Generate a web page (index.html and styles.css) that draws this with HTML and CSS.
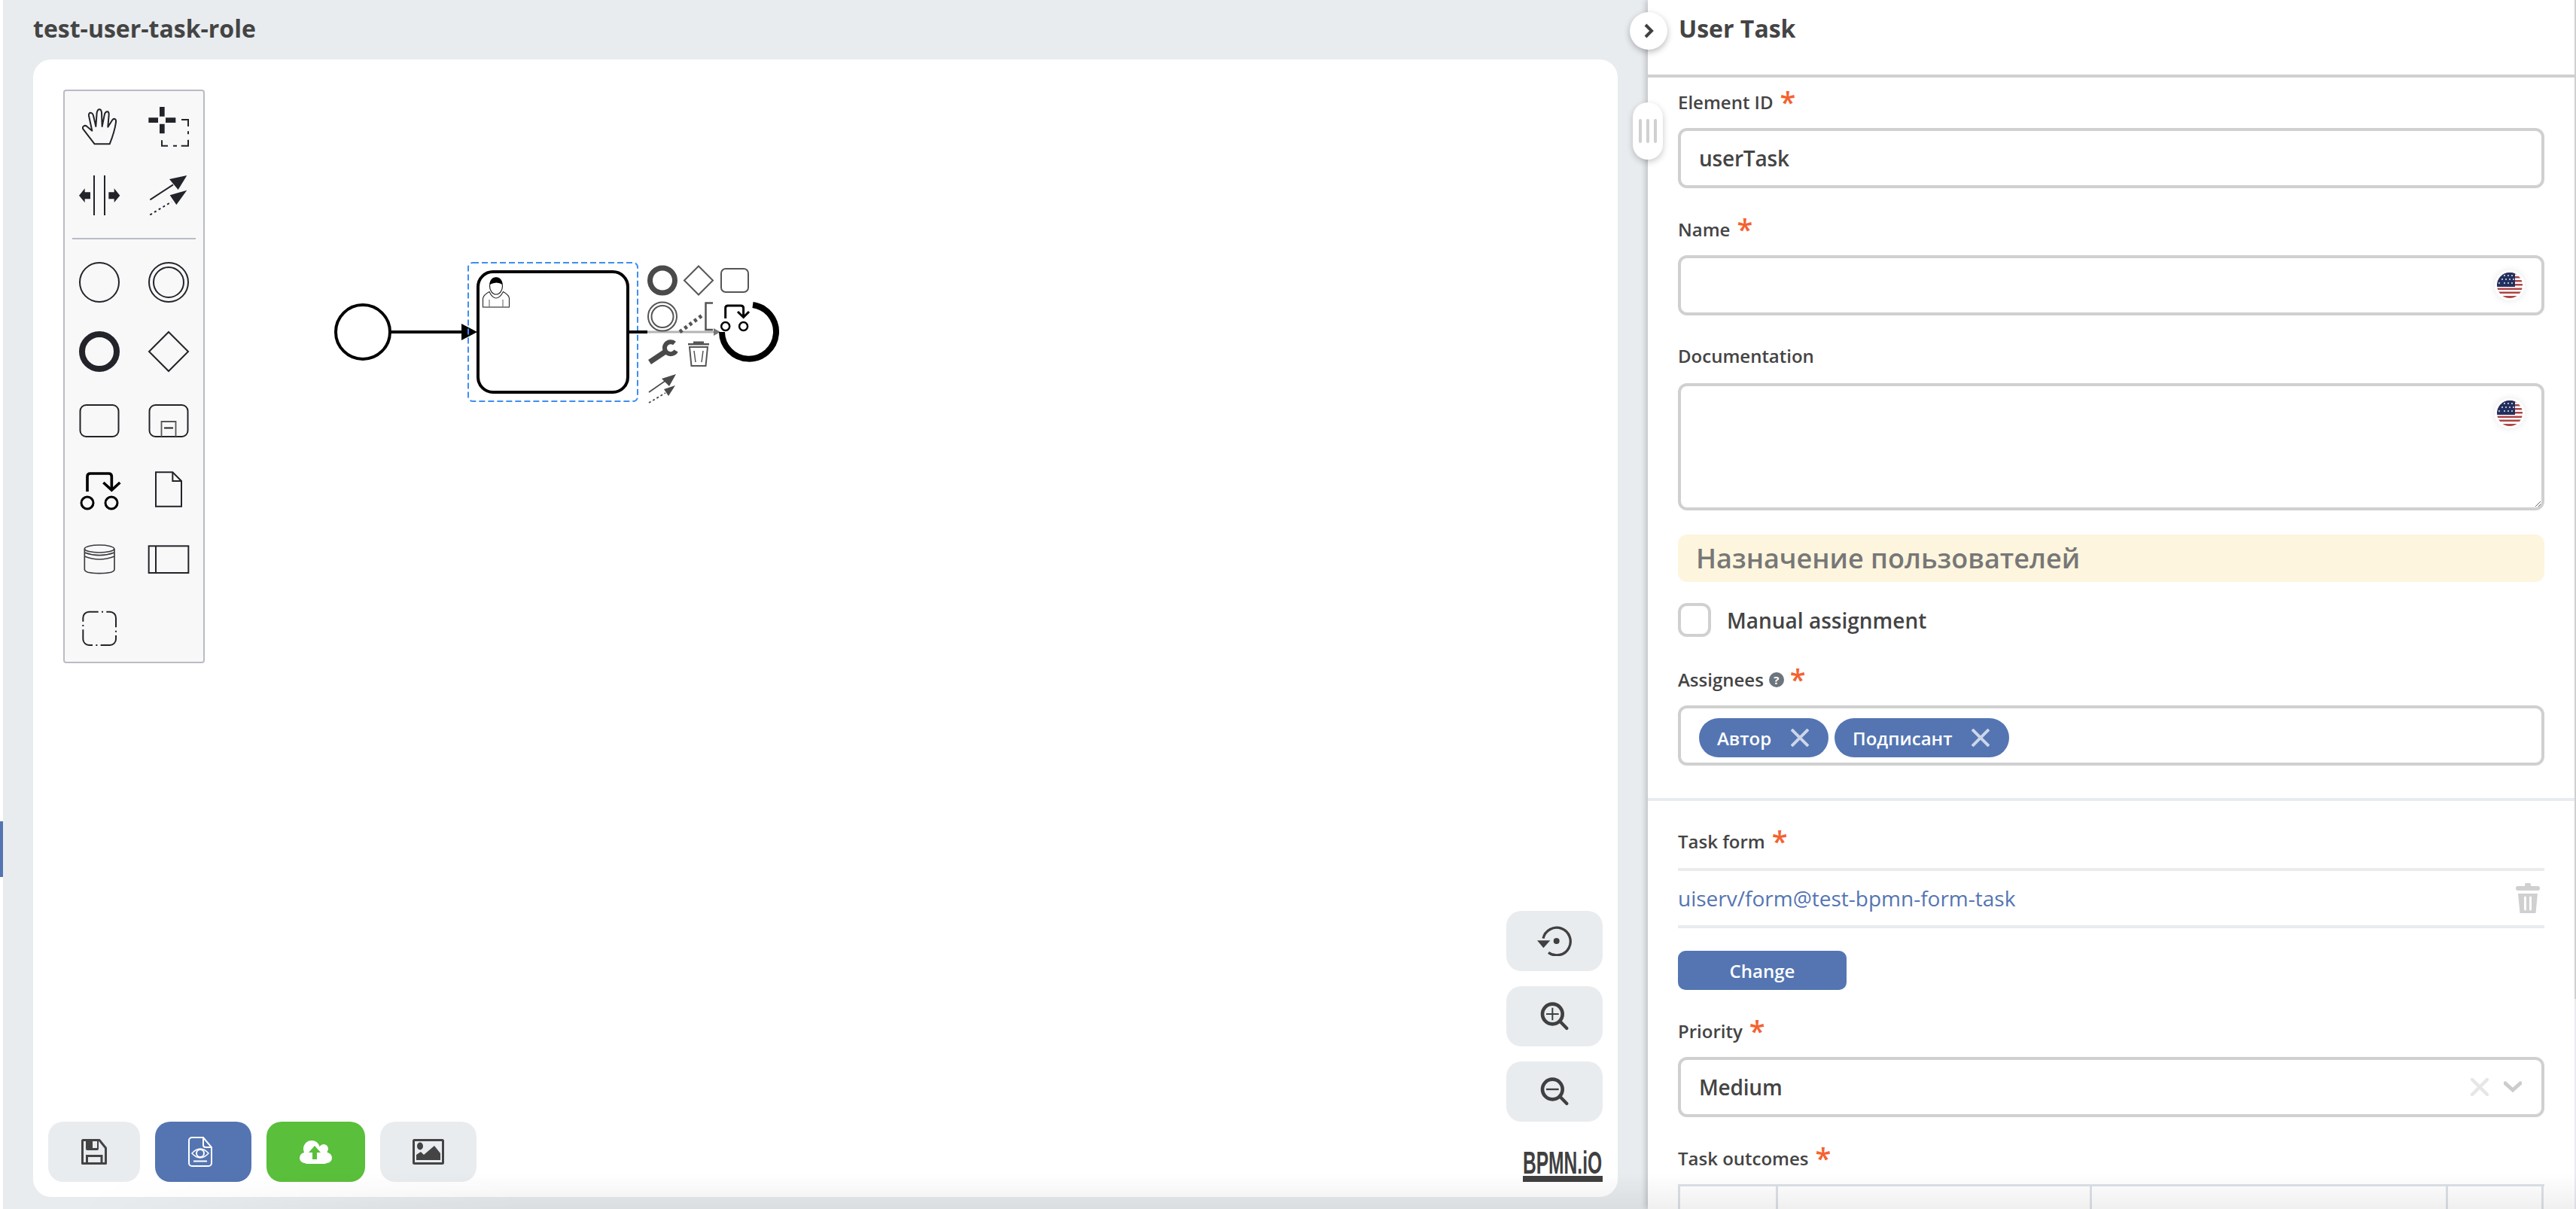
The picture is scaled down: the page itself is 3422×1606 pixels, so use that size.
FILE: index.html
```html
<!DOCTYPE html>
<html lang="en">
<head>
<meta charset="utf-8">
<title>test-user-task-role</title>
<link rel="stylesheet" href="styles.css">
</head>
<body>
<div class="app">
  <div class="edge"><div class="edge-mark"></div></div>
  <main class="workspace">
    <h1 class="title">test-user-task-role</h1>
    <section class="card">
      <svg class="diagram" width="1100" height="600" viewBox="44 79 1100 600" fill="none">
        <circle cx="482" cy="441" r="36" stroke="#000" stroke-width="4" fill="#fff"/>
        <path d="M519 441H616" stroke="#000" stroke-width="4"/>
        <path d="M613 430L634 441L613 452Z" fill="#000"/>
        <rect x="622" y="349" width="225" height="184" rx="6" stroke="#3d8fef" stroke-width="2" stroke-dasharray="8 4"/>
        <rect x="635" y="361" width="199" height="160" rx="20" stroke="#000" stroke-width="4" fill="#fff"/>
        <path d="M641.5 408V396.5Q642 392 650 387.5Q654 396 659 396Q664 396 668.500 387.500Q676 392 676.500 396V408Z" stroke="#333" stroke-width="1.200" fill="#fff"/>
        <path d="M650 408V398M668 408V398M641.500 408H676.500" stroke="#777" stroke-width="1.200"/>
        <ellipse cx="659" cy="380" rx="8.500" ry="11" stroke="#222" stroke-width="1.200" fill="#fff"/>
        <path d="M650.500 378C650.500 365 667.500 365 667.500 378Q660 373 650.500 378Z" fill="#000"/>
        <path d="M835 441H860" stroke="#000" stroke-width="4"/>
        <path d="M860 441H950" stroke="#b5b5b5" stroke-width="3"/>
        <path d="M948 436L957 441L948 446Z" fill="#777"/>
        <path d="M1000 405A36 36 0 1 1 959 441" stroke="#000" stroke-width="8"/>
        <circle cx="880" cy="372.500" r="16.500" stroke="#4a4a4a" stroke-width="7"/>
        <path d="M928 353.500L947 372.500L928 391.500L909 372.500Z" stroke="#555" stroke-width="2" fill="#fff"/>
        <rect x="958" y="357" width="36" height="31" rx="6" stroke="#555" stroke-width="2"/>
        <circle cx="880" cy="420.500" r="19" stroke="#555" stroke-width="2"/>
        <circle cx="880" cy="420.500" r="14.500" stroke="#555" stroke-width="2"/>
        <path d="M903 441L934 418" stroke="#555" stroke-width="5" stroke-dasharray="4 4"/>
        <path d="M947 402.500H937.500V438H947" stroke="#555" stroke-width="2.500"/>
        <path d="M963.700 423V409Q963.700 406 967 406H984Q987.600 406 987.600 409V420M980 414L987.600 421.500L995 414" stroke="#000" stroke-width="3"/>
        <circle cx="963.700" cy="433.500" r="5.500" stroke="#000" stroke-width="2.500" fill="#fff"/>
        <circle cx="987.600" cy="433.500" r="5.500" stroke="#000" stroke-width="2.500" fill="#fff"/>
        <path d="M863 481L884 467" stroke="#4a4a4a" stroke-width="7"/>
        <path d="M896 456A8 8 0 1 0 898 466" stroke="#4a4a4a" stroke-width="6"/>
        <path d="M921 453.500H935V456H942V458.500H914V456H921Z" fill="#555"/>
        <path d="M916 461H940L937.500 486H918.500Z" stroke="#555" stroke-width="2"/>
        <path d="M922 466L924 481M934 466L932 481" stroke="#555" stroke-width="1.500"/>
        <path d="M862 521L888 503" stroke="#4a4a4a" stroke-width="1.700"/>
        <path d="M898 497L879 503L889 513Z" fill="#4a4a4a"/>
        <path d="M862 535L884 522" stroke="#4a4a4a" stroke-width="1.800" stroke-dasharray="3 3"/>
        <path d="M897 512L882 517L888 526Z" fill="#4a4a4a"/>
      </svg>

      <nav class="palette">
        <div class="palette-grid">
          <span class="tool"><svg width="92" height="92" viewBox="258 367 276 276" fill="none"><path d="M377 575L331 515C325 505 340 495 350 508L367 522L354 462C352 447 368 445 373 465L382 505L386 450C390 432 403 432 405 450L407 505L417 455C424 440 435 445 434 458L430 507L447 480C455 470 464 475 462 488C457 525 447 550 437 575Z" stroke="#22242a" stroke-width="6" stroke-linejoin="round"/></svg></span>
          <span class="tool"><svg width="92" height="92" viewBox="534 367 276 276" fill="#22242a"><path d="M636 427H656V465H636ZM636 495H656V533H636ZM592 470H630V490H592ZM660 470H700V490H660Z"/><path d="M723 478H750V505M750 524V536M750 558V582H722M705 582H690M669 582H645V560" stroke="#22242a" stroke-width="6" fill="none"/></svg></span>
          <span class="tool"><svg width="92" height="92" viewBox="258 646 276 276" fill="#22242a"><path d="M375 703V862M417 703V862" stroke="#22242a" stroke-width="6"/><path d="M315 783L338 755V770H360V797H338V811ZM478 783L455 755V770H433V797H455V811Z"/></svg></span>
          <span class="tool"><svg width="92" height="92" viewBox="534 646 276 276" fill="#22242a"><path d="M598 800L690 740" stroke="#22242a" stroke-width="6"/><path d="M745 703L675 718L710 760Z"/><path d="M598 860L684 808" stroke="#22242a" stroke-width="6" stroke-dasharray="9 11"/><path d="M745 762L677 782L703 820Z"/></svg></span>
        </div>
        <div class="palette-sep"></div>
        <div class="palette-grid">
          <span class="tool"><svg width="92" height="92" viewBox="-46 -46 92 92" fill="none"><circle r="26" stroke="#22242a" stroke-width="2"/></svg></span>
          <span class="tool"><svg width="92" height="92" viewBox="-46 -46 92 92" fill="none"><circle r="26" stroke="#22242a" stroke-width="2"/><circle r="20" stroke="#22242a" stroke-width="2"/></svg></span>
          <span class="tool"><svg width="92" height="92" viewBox="-46 -46 92 92" fill="none"><circle r="23" stroke="#22242a" stroke-width="8"/></svg></span>
          <span class="tool"><svg width="92" height="92" viewBox="-46 -46 92 92" fill="none"><path d="M0 -26L26 0L0 26L-26 0Z" stroke="#22242a" stroke-width="2"/></svg></span>
          <span class="tool"><svg width="92" height="92" viewBox="-46 -46 92 92" fill="none"><rect x="-25.500" y="-21" width="51" height="42" rx="8" stroke="#22242a" stroke-width="2"/></svg></span>
          <span class="tool"><svg width="92" height="92" viewBox="-46 -46 92 92" fill="none"><rect x="-25.500" y="-21" width="51" height="42" rx="8" stroke="#22242a" stroke-width="2"/><path d="M-9.500 21V1H9.500V21" stroke="#55575c" stroke-width="1.800"/><path d="M-6 9.500H6" stroke="#22242a" stroke-width="2"/></svg></span>
          <span class="tool"><svg width="92" height="92" viewBox="258 468 276 276" fill="none" stroke="#000"><path d="M348 612V552Q348 540 360 540H433Q445 540 445 552V605" stroke-width="11"/><path d="M412 576L445 606L478 576" stroke-width="11"/><circle cx="348" cy="657" r="24" stroke-width="9"/><circle cx="444" cy="657" r="24" stroke-width="9"/></svg></span>
          <span class="tool"><svg width="92" height="92" viewBox="534 468 276 276" fill="none" stroke="#22242a" stroke-width="6"><path d="M688 535H621V671H723V570Z"/><path d="M688 535V570H723"/></svg></span>
          <span class="tool"><svg width="92" height="92" viewBox="258 742 276 276" fill="none" stroke="#3a3c42" stroke-width="5"><ellipse cx="396" cy="838" rx="59" ry="15"/><path d="M337 838V920Q337 936 396 936Q456 936 456 920V838M337 853Q396 875 456 853M337 868Q396 892 456 868"/></svg></span>
          <span class="tool"><svg width="92" height="92" viewBox="534 742 276 276" fill="none" stroke="#22242a" stroke-width="6"><rect x="593" y="827" width="158" height="107"/><path d="M621 827V934"/></svg></span>
          <span class="tool"><svg width="92" height="92" viewBox="258 1017 276 276" fill="none"><path d="M405 1088H438A24 24 0 0 1 462 1112V1197A24 24 0 0 1 438 1221H355A24 24 0 0 1 331 1197V1112A24 24 0 0 1 355 1088Z" pathLength="488" stroke="#22242a" stroke-width="6" stroke-dasharray="6 13 90 13"/></svg></span>
        </div>
      </nav>

      <div class="actions">
        <button class="btn btn-save" type="button"><svg width="34" height="34" viewBox="0 0 34 34" fill="none"><path d="M2 1.500H24L32.500 12V32.500H1.500V2Z" stroke="#444" stroke-width="3" stroke-linejoin="round"/><path d="M6 1H23V13Q23 15 21 15H8Q6 15 6 13Z" fill="#444"/><rect x="15" y="3" width="6" height="9" fill="#e9ecef"/><path d="M7.500 33V22.500H27V33" stroke="#444" stroke-width="3"/></svg></button>
        <button class="btn btn-preview" type="button"><svg class="preview-icon" width="32" height="40" viewBox="0 0 32 40" fill="none" stroke="#fff" stroke-width="2"><path d="M5 1H20L31 14V35A4 4 0 0 1 27 39H5A4 4 0 0 1 1 35V5A4 4 0 0 1 5 1Z"/><path d="M20 1V11A3 3 0 0 0 23 14H31"/><path d="M5 22Q16 10 27 22Q16 34 5 22Z" stroke-width="1.500"/><circle cx="16" cy="22" r="5"/><path d="M7 32.500H25"/></svg></button>
        <button class="btn btn-deploy" type="button"><svg width="43" height="32" viewBox="0 0 43 32" fill="#fff"><circle cx="16" cy="12" r="11"/><circle cx="32" cy="12" r="6"/><circle cx="7" cy="24" r="7"/><circle cx="36" cy="24" r="7"/><rect x="6" y="14" width="31" height="18" rx="4"/><path d="M20 8L28 17H23V26H17V17H12Z" fill="#5abf3b"/></svg></button>
        <button class="btn btn-image" type="button"><svg width="42" height="34" viewBox="0 0 42 34" fill="none"><rect x="1.500" y="1.500" width="39" height="31" rx="1" stroke="#444" stroke-width="3"/><ellipse cx="10" cy="9.500" rx="4" ry="5" fill="#444"/><path d="M5 28V21L11 17L15 21L29 9L37 19V28Z" fill="#444"/></svg></button>
      </div>

      <div class="zoom">
        <button class="zoom-btn" type="button"><svg width="47" height="40" viewBox="273 152 141 120" fill="none"><path d="M318 258A55 55 0 1 0 297 202" stroke="#404040" stroke-width="10"/><path d="M273 210H325L298 240Z" fill="#404040"/><circle cx="350" cy="212" r="12" fill="#404040"/></svg></button>
        <button class="zoom-btn" type="button"><svg width="40" height="40" viewBox="285 457 120 120" fill="none" stroke="#404040"><circle cx="337" cy="508" r="40" stroke-width="14"/><path d="M312 508H362M337 483V533" stroke-width="6"/><path d="M370 540L394 565" stroke-width="13" stroke-linecap="round"/></svg></button>
        <button class="zoom-btn" type="button"><svg width="40" height="40" viewBox="285 457 120 120" fill="none" stroke="#404040"><circle cx="337" cy="508" r="40" stroke-width="14"/><path d="M312 508H362" stroke-width="7"/><path d="M370 540L394 565" stroke-width="13" stroke-linecap="round"/></svg></button>
      </div>

      <svg class="logo" width="108" height="54" viewBox="0 -12 108 54"><text transform="translate(0 31) scale(.585 1)" font-size="42" class="logo-text">BPMN.iO</text><rect x="0" y="34" width="106" height="8" fill="#404040"/></svg>
    </section>
  </main>

  <aside class="panel">
    <div class="panel-body">
      <header class="panel-head"><h2 class="panel-title">User Task</h2></header>
      <div class="panel-form">
        <div class="label-row first"><span class="label">Element ID</span><span class="req">*</span></div>
        <div class="input"><span>userTask</span></div>

        <div class="label-row"><span class="label">Name</span><span class="req">*</span></div>
        <div class="input"><span class="flag"><svg width="40" height="40" viewBox="0 0 40 40"><use href="#us"/></svg></span></div>

        <div class="label-row doc"><span class="label">Documentation</span></div>
        <div class="area-wrap">
          <textarea class="area" aria-label="Documentation"></textarea>
          <span class="flag"><svg width="40" height="40" viewBox="0 0 40 40"><use href="#us"/></svg></span>
        </div>

        <div class="banner">Назначение пользователей</div>

        <label class="check"><span class="check-box"></span><span class="check-text">Manual assignment</span></label>

        <div class="label-row assignees"><span class="label">Assignees</span><span class="help">?</span><span class="req">*</span></div>
        <div class="input chips">
          <span class="chip chip-a"><span>Автор</span><svg width="24" height="24" viewBox="0 0 24 24"><path d="M1 1L23 23M23 1L1 23" stroke="#cdd6e9" stroke-width="4"/></svg></span>
          <span class="chip chip-b"><span>Подписант</span><svg width="24" height="24" viewBox="0 0 24 24"><path d="M1 1L23 23M23 1L1 23" stroke="#cdd6e9" stroke-width="4"/></svg></span>
        </div>
      </div>

      <div class="divider"></div>

      <div class="panel-form">
        <div class="label-row taskform"><span class="label">Task form</span><span class="req">*</span></div>
        <div class="form-link">
          <a class="link">uiserv/form@test-bpmn-form-task</a>
          <svg width="32" height="40" viewBox="0 0 32 40" fill="#d0d0d0"><rect x="12" y="0" width="8" height="6" rx="2"/><rect x="0" y="4" width="32" height="6" rx="3"/><path d="M3 14H29L26.500 40H5.500Z"/><path d="M12.500 19V35M19.500 19V35" stroke="#fff" stroke-width="3" stroke-linecap="round"/></svg>
        </div>
        <button class="change" type="button">Change</button>

        <div class="label-row"><span class="label">Priority</span><span class="req">*</span></div>
        <div class="input select">
          <span class="select-value">Medium</span>
          <svg width="24" height="24" viewBox="0 0 24 24"><path d="M2 2L22 22M22 2L2 22" stroke="#e6e6e6" stroke-width="4.500" stroke-linecap="round"/></svg>
          <svg width="24" height="16" viewBox="0 0 24 16"><path d="M2 3L12 12L22 3" stroke="#cccccc" stroke-width="5" stroke-linecap="round" fill="none"/></svg>
        </div>

        <div class="label-row"><span class="label">Task outcomes</span><span class="req">*</span></div>
        <div class="outcomes"><span class="cell c1"></span><span class="cell c2"></span><span class="cell c3"></span><span class="cell c4"></span></div>
      </div>
    </div>
    <div class="scroll"><div class="scroll-thumb"></div></div>
    <button class="toggle" type="button"><svg width="14" height="22" viewBox="0 0 14 22" fill="none"><path d="M3 3L11 11L3 19" stroke="#404040" stroke-width="4"/></svg></button>
    <div class="grip"><i></i><i></i><i></i></div>
  </aside>
</div>
<div class="fade"></div>

<svg class="defs" width="0" height="0">
  <defs>
    <clipPath id="usclip"><circle cx="20" cy="20" r="17"/></clipPath>
    <g id="us">
      <circle cx="20" cy="20" r="20" fill="#fff"/>
      <g clip-path="url(#usclip)">
        <rect x="0" y="0" width="40" height="40" fill="#fff"/>
        <path d="M3 3H37V5.500H3ZM3 8H37V10.500H3ZM3 13H37V15.500H3ZM3 18H37V20.500H3ZM3 23.500H37V26H3ZM3 28.500H37V31H3ZM3 34H37V37H3Z" fill="#ad4444"/>
        <rect x="3" y="3" width="24" height="19" fill="#22305f"/>
        <g fill="#e8e8ee"><circle cx="13" cy="7" r="1"/><circle cx="18" cy="7" r="1"/><circle cx="23" cy="7" r="1"/><circle cx="10" cy="12" r="1"/><circle cx="15" cy="12" r="1"/><circle cx="20" cy="12" r="1"/><circle cx="25" cy="12" r="1"/><circle cx="6" cy="17" r="1"/><circle cx="13" cy="17" r="1"/><circle cx="18" cy="17" r="1"/><circle cx="23" cy="17" r="1"/></g>
      </g>
    </g>
  </defs>
</svg>
</body>
</html>
```

FILE: styles.css
```css
* { box-sizing: border-box; }
html, body { margin: 0; height: 100%; }
body {
  background: #fff;
  font-family: "Open Sans", "Noto Sans", sans-serif;
  color: #444;
  overflow: hidden;
}
.app { display: flex; height: 1606px; position: relative; }

.edge { width: 4px; background: #fff; padding-top: 1091px; flex: none; }
.edge-mark { height: 74px; background: #5475b2; }

.workspace { width: 2185px; flex: none; background: #e9ecef; padding: 0 40px; }
.title { margin: 0; height: 79px; padding-top: 16px; font-size: 32px; line-height: 44px; font-weight: 700; color: #444; }
.card { position: relative; height: 1511px; background: #fff; border-radius: 24px; }

.diagram { position: absolute; left: 0; top: 0; }

.palette { position: absolute; left: 40px; top: 40px; width: 188px; height: 762px; padding-top: 1px; background: #f8f8f8; border: 2px solid #b9bcc6; border-radius: 4px; }
.palette-grid { display: grid; grid-template-columns: 92px 92px; grid-auto-rows: 92px; }
.palette-sep { height: 2px; margin: 10px 10px 11px; background: #b9bcc6; }
.tool { display: block; width: 92px; height: 92px; }
.tool svg { display: block; }

.actions { position: absolute; left: 20px; top: 1411px; display: flex; gap: 20px; }
.btn { height: 80px; width: 128px; border: 0; border-radius: 20px; padding: 0; display: flex; align-items: center; justify-content: center; }
.btn-save { width: 122px; background: #e9ecef; }
.btn-preview { background: #5475b2; }
.preview-icon { margin-left: -8px; }
.btn-deploy { width: 131px; background: #5abf3b; }
.btn-image { background: #e9ecef; }

.zoom { position: absolute; right: 20px; top: 1131px; display: flex; flex-direction: column; gap: 20px; }
.zoom-btn { width: 128px; height: 80px; border: 0; border-radius: 20px; background: #e9ecef; padding: 0; display: flex; align-items: center; justify-content: center; }

.logo { position: absolute; right: 18px; bottom: 20px; }
.logo-text { font-family: "Liberation Sans", sans-serif; font-weight: 700; fill: #404040; }

.panel { position: relative; width: 1233px; flex: none; display: flex; background: #fff; box-shadow: -2px 0 8px rgba(0,0,0,.22); }
.panel-body { flex: 1; min-width: 0; }
.scroll { width: 2px; background: #e9ecef; }
.scroll-thumb { height: 1327px; background: #d0d0d0; }
.panel-head { height: 103px; border-bottom: 4px solid #d0d0d0; padding: 16px 41px 0; }
.panel-title { margin: 0; font-size: 32px; line-height: 44px; font-weight: 700; color: #444; }
.panel-form { padding: 0 40px; }

.label-row { height: 34px; margin: 38px 0 17px; display: flex; align-items: center; }
.label-row.first { margin-top: 16px; }
.label-row.doc { margin-bottom: 19px; margin-top: 37px; }
.label-row.assignees { margin-top: 40px; }
.label-row.taskform { margin-top: 37px; margin-bottom: 18px; }
.label { font-size: 24px; font-weight: 600; color: #444; line-height: 34px; }
.req { color: #f4622f; font-size: 38px; font-weight: 600; line-height: 34px; margin-left: 9px; height: 34px; position: relative; top: -1px; }
.help { width: 20px; height: 20px; border-radius: 50%; background: #6c757d; color: #fff; font-size: 15px; line-height: 20px; font-weight: 700; text-align: center; margin-left: 7px; }
.assignees .req { margin-left: 8px; }

.input { position: relative; height: 80px; border: 4px solid #d0d0d0; border-radius: 12px; padding: 0 24px; display: flex; align-items: center; font-size: 28px; font-weight: 600; letter-spacing: -.2px; color: #444; }
.flag { position: absolute; right: 22px; top: 16px; width: 40px; height: 40px; border-radius: 50%; box-shadow: 0 0 10px rgba(0,0,0,.1); }
.flag svg { display: block; }
.area-wrap { position: relative; height: 169px; }
.area { display: block; width: 100%; height: 169px; border: 4px solid #d0d0d0; border-radius: 12px; background: #fff; outline: none; padding: 0; resize: vertical; font: inherit; }
.area-wrap .flag { right: 26px; top: 20px; }

.banner { margin-top: 32px; height: 63px; background: #fdf5dd; border-radius: 12px; padding: 0 24px; font-size: 36px; line-height: 63px; font-weight: 600; color: #777; }

.check { margin-top: 28px; height: 45px; display: flex; align-items: center; gap: 21px; }
.check-box { width: 44px; height: 45px; border: 4px solid #d0d0d0; border-radius: 12px; background: #fff; }
.check-text { font-size: 28px; font-weight: 600; color: #444; }

.chips { padding: 6px 0 0 24px; gap: 8px; letter-spacing: 0; }
.chip { height: 52px; border-radius: 26px; background: #5475b2; color: #fff; font-size: 24px; font-weight: 600; display: flex; align-items: center; justify-content: space-between; }
.chip-a { width: 172px; padding: 0 26px 0 24px; }
.chip-b { width: 232px; padding: 0 26px 0 24px; }

.divider { height: 4px; margin-top: 43px; background: #e9ecef; }

.form-link { height: 80px; border-top: 4px solid #e9ecef; border-bottom: 4px solid #e9ecef; display: flex; align-items: center; justify-content: space-between; padding-right: 6px; }
.link { font-size: 28px; color: #5475b2; }
.change { display: block; margin-top: 30px; width: 224px; height: 52px; border: 0; border-radius: 10px; background: #5475b2; color: #fff; font: 600 24px "Open Sans", sans-serif; padding: 0; }

.select { padding-right: 26px; gap: 20px; }
.select-value { flex: 1; }

.outcomes { height: 60px; display: grid; grid-template-columns: 130px 417px 473px 130px; border-top: 3px solid #dde1e7; }
.cell { border-left: 3px solid #dde1e7; }
.c4 { border-right: 3px solid #dde1e7; }

.toggle { position: absolute; left: -24px; top: 16px; width: 50px; height: 50px; border-radius: 50%; border: 0; background: #fff; padding: 0; display: flex; align-items: center; justify-content: center; box-shadow: 0 3px 8px rgba(0,0,0,.28); }
.grip { position: absolute; left: -20px; top: 136px; width: 40px; height: 76px; border-radius: 20px; background: #fff; box-shadow: 0 3px 8px rgba(0,0,0,.22); display: flex; align-items: center; justify-content: center; gap: 6px; }
.grip i { display: block; width: 4px; height: 32px; background: #d0d0d0; border-radius: 2px; }

.fade { position: fixed; left: 0; right: 0; bottom: 0; height: 48px; pointer-events: none; background: linear-gradient(to bottom, rgba(0,0,0,0), rgba(0,0,0,.06)); -webkit-mask-image: linear-gradient(to right, transparent 100px, #000 700px); mask-image: linear-gradient(to right, transparent 100px, #000 700px); }
.defs { position: absolute; }
```
